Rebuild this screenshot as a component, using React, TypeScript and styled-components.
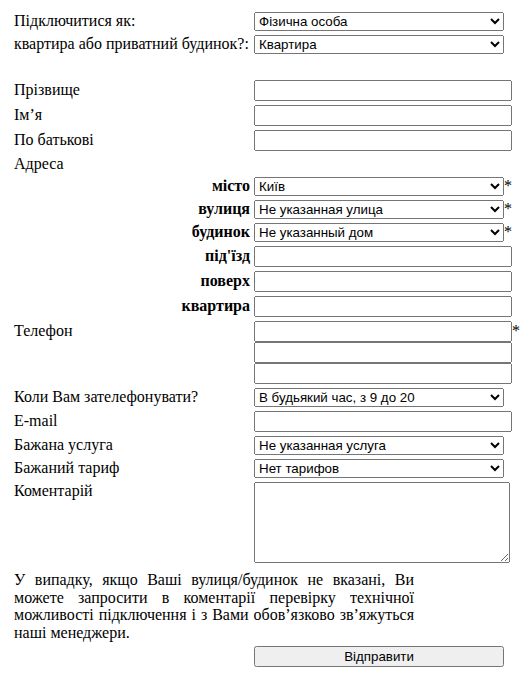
import React from 'react';
import styled, { createGlobalStyle } from 'styled-components';

const GlobalStyle = createGlobalStyle`
  body {
    margin: 0;
    background: #fff;
    color: #000;
    font-family: "Liberation Serif", "Times New Roman", serif;
    font-size: 16px;
  }
`;

const Form = styled.form`
  display: grid;
  grid-template-columns: 236px 277px;
  column-gap: 4px;
  row-gap: 4px;
  align-items: baseline;
  padding: 12px 0 0 14px;
`;

const Label = styled.div<{ $sub?: boolean; $top?: boolean }>`
  white-space: nowrap;
  text-align: ${props => (props.$sub ? 'right' : 'left')};
  font-weight: ${props => (props.$sub ? 'bold' : 'normal')};
  align-self: ${props => (props.$top ? 'start' : 'baseline')};
`;

const Field = styled.div<{ $top?: boolean }>`
  display: flex;
  align-items: baseline;
  white-space: nowrap;
  align-self: ${props => (props.$top ? 'start' : 'baseline')};
`;

const PhoneStack = styled.div`
  display: flex;
  flex-direction: column;
`;

const Spacer = styled.div`
  grid-column: 1 / -1;
  height: 18px;
`;

const controlFont = `13.333px "Liberation Sans", Arial, sans-serif`;

const Select = styled.select`
  width: 250px;
  margin: 0;
  font: ${controlFont};
  color: #000;
`;

const TextInput = styled.input`
  width: 250px;
  margin: 0;
  font: ${controlFont};
`;

const TextArea = styled.textarea`
  width: 250px;
  height: 75px;
  margin: 0;
  font: 13.333px "Liberation Mono", monospace;
`;

const Star = styled.span`
  font-size: 16px;
`;

const Note = styled.p`
  grid-column: 1 / -1;
  width: 400px;
  margin: 0;
  padding: 4px 0 1px;
  line-height: 1.1;
  text-align: justify;
`;

const SubmitButton = styled.button`
  width: 250px;
  margin: 0;
  box-sizing: border-box;
  font: ${controlFont};
`;

const Row: React.FC<{ label: string; sub?: boolean; children?: React.ReactNode }> = ({
  label,
  sub,
  children,
}) => (
  <>
    <Label $sub={sub}>{label}</Label>
    <Field>{children}</Field>
  </>
);

const App: React.FC = () => {
  return (
    <>
      <GlobalStyle />
      <Form onSubmit={e => e.preventDefault()}>
        <Row label="Підключитися як:">
          <Select defaultValue="person">
            <option value="person">Фізична особа</option>
          </Select>
        </Row>
        <Row label="квартира або приватний будинок?:">
          <Select defaultValue="flat">
            <option value="flat">Квартира</option>
          </Select>
        </Row>
        <Spacer />

        <Row label="Прізвище">
          <TextInput type="text" />
        </Row>
        <Row label="Ім’я">
          <TextInput type="text" />
        </Row>
        <Row label="По батькові">
          <TextInput type="text" />
        </Row>
        <Row label="Адреса" />

        <Row label="місто" sub>
          <Select defaultValue="kyiv">
            <option value="kyiv">Київ</option>
          </Select>
          <Star>*</Star>
        </Row>
        <Row label="вулиця" sub>
          <Select defaultValue="none">
            <option value="none">Не указанная улица</option>
          </Select>
          <Star>*</Star>
        </Row>
        <Row label="будинок" sub>
          <Select defaultValue="none">
            <option value="none">Не указанный дом</option>
          </Select>
          <Star>*</Star>
        </Row>
        <Row label="під'їзд" sub>
          <TextInput type="text" />
        </Row>
        <Row label="поверх" sub>
          <TextInput type="text" />
        </Row>
        <Row label="квартира" sub>
          <TextInput type="text" />
        </Row>

        <Label>Телефон</Label>
        <PhoneStack>
          <Field>
            <TextInput type="text" />
            <Star>*</Star>
          </Field>
          <Field>
            <TextInput type="text" />
          </Field>
          <Field>
            <TextInput type="text" />
          </Field>
        </PhoneStack>

        <Row label="Коли Вам зателефонувати?">
          <Select defaultValue="any">
            <option value="any">В будьякий час, з 9 до 20</option>
          </Select>
        </Row>
        <Row label="E-mail">
          <TextInput type="text" />
        </Row>
        <Row label="Бажана услуга">
          <Select defaultValue="none">
            <option value="none">Не указанная услуга</option>
          </Select>
        </Row>
        <Row label="Бажаний тариф">
          <Select defaultValue="none">
            <option value="none">Нет тарифов</option>
          </Select>
        </Row>

        <Label $top>Коментарій</Label>
        <Field $top>
          <TextArea />
        </Field>

        <Note>
          У випадку, якщо Ваші вулиця/будинок не вказані, Ви можете запросити в коментарії перевірку
          технічної можливості підключення і з Вами обов’язково зв’яжуться наші менеджери.
        </Note>

        <div />
        <Field>
          <SubmitButton type="submit">Відправити</SubmitButton>
        </Field>
      </Form>
    </>
  );
};

export default App;
